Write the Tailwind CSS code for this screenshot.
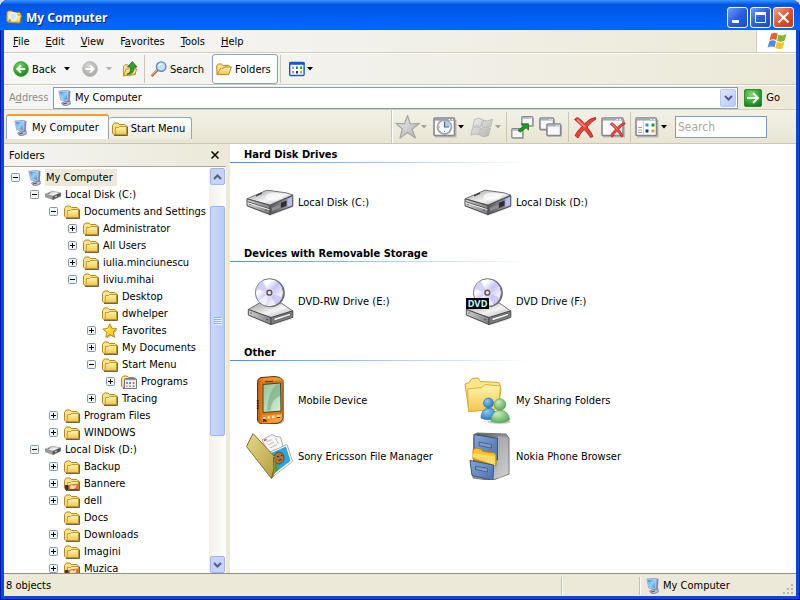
<!DOCTYPE html>
<html lang="en">
<head>
    <meta charset="UTF-8">
    <meta name="viewport" content="width=device-width, initial-scale=1.0">
    <title>My Computer</title>

    <!-- Tailwind -->
    <script src="https://cdn.jsdelivr.net/npm/@tailwindcss/browser@4"></script>
</head>
<body class="bg-[#d4dcf0] font-['Tahoma','DejaVu_Sans_Condensed',sans-serif] text-[11px] leading-[15px] text-black">

    <!-- Icon sprite -->
    <svg class="absolute h-0 w-0">
        <defs>
            <linearGradient id="g-folder" x1="0" y1="0" x2="0" y2="1"><stop offset="0" stop-color="#fff6b0"/><stop offset="1" stop-color="#f2c64c"/></linearGradient>
            <linearGradient id="g-screen" x1="0" y1="0" x2="1" y2="1"><stop offset="0" stop-color="#2f86e8"/><stop offset=".5" stop-color="#8fd6fb"/><stop offset="1" stop-color="#2f84e2"/></linearGradient>
            <linearGradient id="g-metal" x1="0" y1="0" x2="1" y2="1"><stop offset="0" stop-color="#9c9c9e"/><stop offset=".55" stop-color="#f4f4f4"/><stop offset="1" stop-color="#a2a2a6"/></linearGradient>
            <linearGradient id="g-side" x1="0" y1="0" x2="1" y2="0"><stop offset="0" stop-color="#5c5c5e"/><stop offset="1" stop-color="#a4a4b6"/></linearGradient>
            <linearGradient id="g-front" x1="0" y1="0" x2="1" y2="0"><stop offset="0" stop-color="#d0d0d0"/><stop offset="1" stop-color="#808083"/></linearGradient>
            <linearGradient id="g-disc" x1="0" y1="0" x2="1" y2="1"><stop offset="0" stop-color="#e2e2f4"/><stop offset=".3" stop-color="#fff"/><stop offset=".5" stop-color="#c4c4fa"/><stop offset=".75" stop-color="#f6f0ff"/><stop offset="1" stop-color="#c8c8e8"/></linearGradient>
            <radialGradient id="g-green" cx=".4" cy=".3" r=".8"><stop offset="0" stop-color="#7fdc6c"/><stop offset=".6" stop-color="#2ea32a"/><stop offset="1" stop-color="#15741a"/></radialGradient>
            <radialGradient id="g-grey" cx=".4" cy=".3" r=".8"><stop offset="0" stop-color="#d8d8d6"/><stop offset="1" stop-color="#a3a3a0"/></radialGradient>
            <linearGradient id="g-orange" x1="0" y1="0" x2="1" y2="0"><stop offset="0" stop-color="#c65a08"/><stop offset=".25" stop-color="#f58a1c"/><stop offset="1" stop-color="#f9a642"/></linearGradient>
            <linearGradient id="g-lcd" x1="0" y1="0" x2="1" y2="1"><stop offset="0" stop-color="#8fc39b"/><stop offset="1" stop-color="#d4f2d4"/></linearGradient>
            <linearGradient id="g-olive" x1="0" y1="0" x2="1" y2="1"><stop offset="0" stop-color="#e8d98a"/><stop offset="1" stop-color="#b39c3c"/></linearGradient>
            <linearGradient id="g-drawer" x1="0" y1="0" x2="1" y2="1"><stop offset="0" stop-color="#86a6d4"/><stop offset="1" stop-color="#4a70ac"/></linearGradient>
            <linearGradient id="g-cabinet" x1="0" y1="0" x2="1" y2="1"><stop offset="0" stop-color="#4c4c4e"/><stop offset=".6" stop-color="#a8a8aa"/><stop offset="1" stop-color="#e0e0e0"/></linearGradient>
            <radialGradient id="g-blueman" cx=".35" cy=".3" r=".8"><stop offset="0" stop-color="#8ccaf8"/><stop offset="1" stop-color="#1a6cc4"/></radialGradient>
            <radialGradient id="g-greenman" cx=".35" cy=".3" r=".8"><stop offset="0" stop-color="#c8ecc0"/><stop offset="1" stop-color="#4ea64c"/></radialGradient>
            <linearGradient id="g-silver" x1="0" y1="0" x2="1" y2="1"><stop offset="0" stop-color="#f0f0ee"/><stop offset="1" stop-color="#b2b2b0"/></linearGradient>

            <symbol id="folder" viewBox="0 0 16 16">
                <path d="M2 14.5h13.5V5.500" fill="none" stroke="#6b6558"/>
                <path d="M.5 4.500 2.300 2h3.700l1.500 1.500h5.500l1.500 1.500v8.500H1.800L.5 12z" fill="#fbe48c" stroke="#b8861c"/>
                <path d="M3.500 6.500h3l1.200-1h6.800v8H3z" fill="url(#g-folder)" stroke="#c08f1f" stroke-width=".9"/>
            </symbol>
            <symbol id="folder-open" viewBox="0 0 16 16">
                <path d="M1 13.500.7 4.600 2.400 3h3.200l1.400 1.400h5.600l.8 1.200v2.200" fill="#fbe38b" stroke="#b98617"/>
                <path d="M1.200 13.600 4.600 7.400l3-.2 1-1.200h6.800l-2.700 7.600z" fill="url(#g-folder)" stroke="#b98617"/>
            </symbol>
            <symbol id="folder-media" viewBox="0 0 16 16">
                <use href="#folder"/>
                <path d="M1 9q3 1.500 6-.8l7.500-.7v6.200H1.500z" fill="#d9762a"/>
                <path d="M1 9h3.400v5H1.400z" fill="#3a3230"/>
                <path d="M6 10.200q2-2 4-.4l2.500-1.200-.8 3.200-3 1.500-2.700-.8z" fill="#f6d7b4"/>
                <path d="M5 13.700h9.500" stroke="#7a3a18"/>
            </symbol>
            <symbol id="folder-programs" viewBox="0 0 16 16">
                <use href="#folder"/>
                <rect x="3.500" y="4.500" width="12" height="10" rx="1" fill="#f6f6fb" stroke="#6c7684"/>
                <path d="M4 5.500h11" stroke="#8d99ad" stroke-width="1.400"/>
                <path d="M6 8v2" stroke="#7f68c8" stroke-width="1.600"/><path d="M9 8v2" stroke="#2c7ae0" stroke-width="1.600"/><path d="M12.600 8v2" stroke="#e05a34" stroke-width="1.600"/>
                <path d="M6 11.500v1.500" stroke="#e6a32a" stroke-width="1.600"/><path d="M9 11.500v1.500" stroke="#e05a34" stroke-width="1.600"/><path d="M12.600 11.500v1.500" stroke="#2f9a38" stroke-width="1.600"/>
            </symbol>
            <symbol id="folder-search" viewBox="0 0 16 16">
                <path d="M1 12.500V3.500L2.400 2h3.800l1.400 1.500h6l1 1.300v8z" fill="#fbe38b" stroke="#c08a1c"/>
                <path d="M3 13.500 4.600 6h10.900l-1.800 8z" fill="url(#g-folder)" stroke="#b98617"/>
                <circle cx="7.300" cy="7.600" r="3.800" fill="#cfe8fb" stroke="#f4f4f4" stroke-width="1.400"/>
                <path d="m4.500 10.600-2 3" stroke="#c98b42" stroke-width="2"/>
            </symbol>
            <symbol id="computer" viewBox="0 0 16 16">
                <path d="M10.500 1 13.500.8l-.7 10.700-3.300.8z" fill="#8088ac"/>
                <path d="M1.800 1 11 .3l1 .8-1.200 10-7-1z" fill="#c3cdea" stroke="#8a96bd" stroke-width=".7"/>
                <path d="M2.800 2 10.800 1.400 9.800 9.900l-5.200-.8z" fill="url(#g-screen)"/>
                <path d="M4.500 13.200q2.500-2.400 5-1.400l3.500-1 .3 3.200-4 1.600q-3.600.5-4.800-2.400z" fill="#b9bed2" stroke="#6f7696" stroke-width=".8"/>
                <path d="m6 14 4-1" stroke="#4e577a"/>
            </symbol>
            <symbol id="disk-small" viewBox="0 0 16 16">
                <path d="m.3 7.200 7-3 8.200 1.700L8 9.400z" fill="url(#g-metal)" stroke="#868686" stroke-width=".6"/>
                <path d="M.3 7.200 8 9.600v3L.3 9.800z" fill="#a0a0a2" stroke="#666" stroke-width=".5"/>
                <path d="m8 9.600 7.500-3.600v3.200L8 12.600z" fill="#555558" stroke="#4a4a4c" stroke-width=".5"/>
                <path d="m9.800 10 2.200-1" stroke="#ddd"/><path d="m2.800 6.900 2.400-1" stroke="#555" stroke-width=".7"/>
            </symbol>
            <symbol id="star" viewBox="0 0 16 16">
                <path d="m8.800 2 2 4.300 4.800.4-3.600 3.400 1.300 5.200-4.500-2.500-4.300 3 .9-5.100z" fill="#777" opacity=".6"/>
                <path d="m7.800.8 2 4.400 4.900.3-3.600 3.400 1.300 5-4.500-2.500-4.100 2.900.9-5L.9 6l4.800-.7z" fill="#fdd52a" stroke="#b9820c" stroke-width=".9"/>
                <path d="M7.600 2.800 6.400 6l-3 .6 3 .8z" fill="#fff7bd"/>
            </symbol>
            <symbol id="plus" viewBox="0 0 9 9">
                <rect x=".5" y=".5" width="8" height="8" rx="1" fill="#f4f3ee" stroke="#7898b5"/>
                <path d="M2 4.500h5M4.500 2v5" stroke="#000"/>
            </symbol>
            <symbol id="minus" viewBox="0 0 9 9">
                <rect x=".5" y=".5" width="8" height="8" rx="1" fill="#f4f3ee" stroke="#7898b5"/>
                <path d="M2 4.500h5" stroke="#000"/>
            </symbol>
            <symbol id="caret" viewBox="0 0 6 4"><path d="M0 0h6L3 3.500z" fill="currentColor"/></symbol>
            <symbol id="chevron" viewBox="0 0 9 6"><path d="m1 1 3.500 3.500L8 1" fill="none" stroke="#4d6185" stroke-width="2"/></symbol>
            <symbol id="back" viewBox="0 0 16 16">
                <circle cx="8" cy="8" r="7.400" fill="url(#g-green)" stroke="#4aa544" stroke-width=".8"/>
                <path d="M12.400 8H5M8 4.400 4.400 8 8 11.600" fill="none" stroke="#fff" stroke-width="2"/>
            </symbol>
            <symbol id="forward" viewBox="0 0 16 16">
                <circle cx="8" cy="8" r="7.400" fill="url(#g-grey)" stroke="#b2b2b0" stroke-width=".8"/>
                <path d="M3.600 8H11M8 4.400 11.600 8 8 11.600" fill="none" stroke="#fff" stroke-width="2"/>
            </symbol>
            <symbol id="up" viewBox="0 0 16 16">
                <path d="M1.500 14.800V5.200L3 3.800h3l1.300 1.300h6.200v8.200z" fill="#fbe38b" stroke="#b98617" stroke-width=".8"/>
                <path d="M1.600 14.800 4 8h10.800l-2 5.600z" fill="url(#g-folder)" stroke="#b98617" stroke-width=".8"/>
                <path d="M5 13.200q4-1 3.800-7.200H5.600L10.400.6 15 6h-2.900q.2 7.600-7.100 7.200z" fill="#2fa52c" stroke="#146b18" stroke-width=".8"/>
            </symbol>
            <symbol id="search" viewBox="0 0 16 16">
                <path d="m1.400 14.400 5-5.200" stroke="#a87458" stroke-width="2.600" stroke-linecap="round"/>
                <path d="m1.400 13.800 4.500-4.700" stroke="#e2b79a" stroke-linecap="round"/>
                <circle cx="10.200" cy="5.600" r="4.700" fill="#bfe4fc" stroke="#6585bd" stroke-width="1.400"/>
                <path d="M7.600 5.200q.6-2.200 2.800-2.400" fill="none" stroke="#fff" stroke-width="1.300"/>
            </symbol>
            <symbol id="views" viewBox="0 0 16 16">
                <rect x=".7" y="1.500" width="14.400" height="13" rx="1" fill="#fff" stroke="#1459c9" stroke-width="1.400"/>
                <path d="M.5 2.500h15" stroke="#1459c9" stroke-width="2.600"/>
                <path d="M3 5.500h2v2.600H3z" fill="#a996d4"/><path d="M7 5.500h2v2.600H7z" fill="#2c70d8"/><path d="M11 5.500h2v2.600h-2z" fill="#1d9b24"/>
                <path d="M3 10h2v2.600H3z" fill="#ef7c52"/><path d="M7 10h2v2.600H7z" fill="#122e86"/><path d="M11 10h2v2.600h-2z" fill="#d4a313"/>
            </symbol>
            <symbol id="go" viewBox="0 0 18 18">
                <rect x=".5" y=".5" width="17" height="17" rx="1.500" fill="url(#g-green)" stroke="#2f8c30"/>
                <path d="M3 9h10.500M9 4l5 5-5 5" fill="none" stroke="#fff" stroke-width="2"/>
            </symbol>
            <symbol id="flag" viewBox="0 0 20 18">
                <path d="M4 2.200Q7-.6 10.600 1.700L9.300 8.200Q6 6.400 2.500 8.500z" fill="#ec5f2c"/>
                <path d="M11.500 2.400Q15 4.600 19.500 2L17.700 8.500Q14.200 10.700 10.100 8.700z" fill="#7cb832"/>
                <path d="M2.200 9.500Q5.500 7.400 9 9.200L7.600 15.600Q4.200 13.600.6 15.700z" fill="#4c8fe4"/>
                <path d="M9.900 9.700Q13.600 11.800 17.400 9.700L15.800 15.900Q12 18.200 8.400 16z" fill="#fbc321"/>
            </symbol>
            <symbol id="flag-grey" viewBox="0 0 24 24">
                <path d="M4.500 4.500Q8.500 2 12.500 4.500L11 11.500Q7 9.500 2.800 11.800zM13.600 5.200Q17.500 7 22.500 4.200L20.700 11.600Q16.600 14.200 12.100 12zM2.500 13Q6.600 10.600 10.700 12.800L9.200 20Q5 17.700.8 20.100zM11.800 13.300Q16 15.500 20.400 13L18.600 20.400Q14.500 23 10.300 20.700z" fill="url(#g-silver)" stroke="#b2b2b0" stroke-width=".8"/>
            </symbol>
            <symbol id="star-grey" viewBox="0 0 26 26">
                <path d="m12.500 1.500 2.800 8.500 9.200-.6-7.500 5.800 3.500 8.800-8-5.400-7.500 5.400 2.400-9-6.500-5.600 8.600.4z" fill="url(#g-silver)" stroke="#a4a4a2" stroke-width="1.200" stroke-linejoin="round"/>
            </symbol>
            <symbol id="history" viewBox="0 0 24 24">
                <path d="M2 21.500h20.500V5" fill="none" stroke="#bdbab0" stroke-width="2"/>
                <rect x="1" y="3" width="20.500" height="17.500" rx="1" fill="#fff" stroke="#85878d" stroke-width="1.600"/>
                <path d="M1.500 4.500h20" stroke="#9a9da6" stroke-width="2.400"/><path d="M15.500 4.500h1.500M18.500 4.500H20" stroke="#fff"/>
                <circle cx="11.500" cy="12" r="7" fill="#f8fbff" stroke="#a1a5ad" stroke-width="1.800"/>
                <path d="M11.500 6v6h5.500q-.5-5.500-5.500-6z" fill="#a5cdf0"/><path d="M11.500 6.500V12h4.500" fill="none" stroke="#5b6270" stroke-width="1.200"/>
                <path d="M11.500 17v-1M5.800 12h1" stroke="#777"/>
            </symbol>
            <symbol id="mini-window" viewBox="0 0 14 12">
                <path d="M1.500 11.500H13.500V2" fill="none" stroke="#bdbab0"/>
                <rect x=".8" y=".8" width="12" height="10" rx="1" fill="#f7f8fa" stroke="#85878f" stroke-width="1.400"/>
                <path d="M1.500 2.200h11" stroke="#aab1bd" stroke-width="1.600"/><path d="M9 2.200h1M11 2.200h1" stroke="#fff"/>
            </symbol>
            <symbol id="window-move" viewBox="0 0 24 24">
                <use href="#mini-window" x="10" y="1" width="13" height="11"/>
                <use href="#mini-window" x="0" y="13" width="13" height="11"/>
                <path d="M7 15.500 12.500 11l-2-2.200h7V15l-2.400-2.200-6 4.400z" fill="#15a01c" stroke="#0b6d12" stroke-width=".8"/>
            </symbol>
            <symbol id="window-copy" viewBox="0 0 24 24">
                <use href="#mini-window" x="0" y="2" width="16" height="14"/>
                <use href="#mini-window" x="7" y="8" width="16" height="14"/>
            </symbol>
            <symbol id="delete" viewBox="0 0 24 24">
                <path d="M1.500 4.500q2-2.500 4-1.500 3.500 2.500 6 6Q16.500 3 22.500 2.500L23 4q-5 2.500-9 8 4 4.500 6 9.500l-2.500 1q-3-5-6.500-8-4 4-6 8.500L2 20.500q2.500-5 7-9-3.500-4-7.500-7z" fill="#e84438" stroke="#b02420" stroke-width=".9"/>
                <path d="m4 4.500 8 7.500" stroke="#fb938a" stroke-width="1.200"/>
            </symbol>
            <symbol id="window-close" viewBox="0 0 26 24">
                <path d="M2 21.500h21V5" fill="none" stroke="#bdbab0" stroke-width="2"/>
                <rect x="1" y="3" width="21" height="17.500" rx="1" fill="#fbfbfc" stroke="#85878f" stroke-width="1.600"/>
                <path d="M1.500 4.500h20" stroke="#a3a9b4" stroke-width="2.200"/><path d="M15.500 4.500H17M18.500 4.500H20" stroke="#fff"/>
                <use href="#delete" x="8" y="6" width="17" height="17"/>
            </symbol>
            <symbol id="window-views" viewBox="0 0 24 24">
                <path d="M2 21.500h20.500V5" fill="none" stroke="#bdbab0" stroke-width="2"/>
                <rect x="1" y="3" width="20.500" height="17.500" rx="1" fill="#fff" stroke="#85878d" stroke-width="1.600"/>
                <path d="M1.500 4.500h20" stroke="#a3a9b4" stroke-width="2.200"/><path d="M15.500 4.500H17M18.500 4.500H20" stroke="#fff"/>
                <path d="M8.500 6v14" stroke="#d4d4d4"/><path d="M3 12.500h4M3 15h4M3 17.500h4" stroke="#a4a4a4"/>
                <path d="M10.500 8.500h3v3h-3z" fill="#1e90f0"/><path d="M16.500 8.500h3v3h-3z" fill="#1d9b24"/>
                <path d="M10.500 14.500h3v3h-3z" fill="#12349a"/><path d="M16.500 14.500h3v3h-3z" fill="#d9a013"/>
            </symbol>

            <symbol id="hdd" viewBox="0 0 48 48">
                <path d="M2 29 24 38l23-9v-3z" fill="#999" opacity=".35"/>
                <path d="M1 20.800 21 12.200 40 14.800 46.700 17 24 27z" fill="url(#g-metal)" stroke="#737375"/>
                <path d="M19.500 20.500q-1-5 7-6l9 1.600q4 2.400-1.500 4.900-7 3.600-14.500-.5z" fill="#fff" opacity=".65"/>
                <path d="M1 20.800 24 27.500v9L1 27.800z" fill="url(#g-front)" stroke="#4c4c4e"/>
                <path d="m1.500 23.800 22.300 7" stroke="#555"/><path d="m1.500 24.800 22.300 7" stroke="#eee"/>
                <path d="m24 27.500 22.800-10v10.600L24 36.500z" fill="url(#g-side)" stroke="#4a4a50"/>
                <path d="m35 24.800 5.500-2.400v5.400L35 30z" fill="#2e2e32"/>
                <path d="m41.500 21 4.500-2v8l-4.500 1.700z" fill="#bcbcf2"/><path d="m26 30 8-3.300v3L26 33z" fill="#8f8f93"/>
                <path d="m10 17.800 6-2.600" stroke="#3d3d3f" stroke-width="1.400"/>
                <path d="M4 26.200v1M20 31.500v1.500" stroke="#444"/>
            </symbol>
            <symbol id="optical" viewBox="0 0 48 48">
                <path d="M3 39 25 48.500 47 42z" fill="#999" opacity=".35"/>
                <path d="m2.300 32.500 11-6.500h22l11.500 8L25 41z" fill="url(#g-metal)" stroke="#737375"/>
                <path d="M2.300 32.500 25 40.500v7L2.300 38z" fill="url(#g-front)" stroke="#4c4c4e"/>
                <path d="m25 40.500 21.800-6.700v6.500L25 47.500z" fill="#7e7e82" stroke="#4a4a50"/>
                <path d="m28 41.200 16.500-5v2.300L28 44z" fill="#f2f2f2" stroke="#555" stroke-width=".7"/>
                <path d="M43 40h1.500" stroke="#24a32a"/><path d="M5 35.500v1.200M21 42v1.200" stroke="#333"/>
                <circle cx="24.600" cy="16" r="14.200" fill="#5e5e63"/>
                <circle cx="23.400" cy="15.700" r="14" fill="url(#g-disc)" stroke="#77777c"/>
                <path d="M23.400 15.700 10 12q2-6 6.500-8.600z" fill="#b6b6fa" opacity=".6"/>
                <path d="m23.400 15.700 12.500 4.500q-2 5-6.500 7.300z" fill="#b6b6fa" opacity=".6"/>
                <path d="m23.400 15.700-4 12.800q-4-1-7-5z" fill="#fff" opacity=".7"/>
                <circle cx="23.400" cy="15.700" r="4.500" fill="#eed4ee"/>
                <circle cx="23.400" cy="15.700" r="2.400" fill="#e8e8e8" stroke="#5a5a5e" stroke-width="1.500"/>
            </symbol>
            <symbol id="pda" viewBox="0 0 48 48">
                <path d="M13 47.500 34 48q4-1 4-4V5z" fill="#888" opacity=".5"/>
                <path d="M11.500 5.500Q12 2 15 1.500l14-1q6 0 8 4v38q-1 4-6 5l-14 .5q-5-.5-5.500-4z" fill="url(#g-orange)" stroke="#5c3213"/>
                <path d="M15.500 5.500 36 4v34l-20 1z" fill="#d97818"/>
                <path d="M17 8.500 34.500 7l.5 28-18 1.500z" fill="url(#g-lcd)" stroke="#4e4430"/>
                <path d="M21 34.500q1-18 9-26l4-.3v12q-9 3-9.500 14z" fill="#5c9a70" opacity=".45"/>
                <path d="M19 5.500h8" stroke="#7d3b10" stroke-width="1.400"/><path d="M30.500 3.500h3" stroke="#8dc63a" stroke-width="1.600"/>
                <path d="M11.800 24v9" stroke="#3b230f" stroke-width="2" stroke-dasharray="1.500 1"/>
                <path d="M17 42h2.500M21.500 41.300h2.500M26 40.800h2.500M31 40h3" stroke="#efe0c4" stroke-width="2.200"/><path d="M17 43.500h2.500M31 41.500h3" stroke="#5c3213"/>
                <path d="M17 45.500q2-2 3.500 0" fill="none" stroke="#4a2408" stroke-width="1.400"/>
            </symbol>
            <symbol id="sony" viewBox="0 0 48 48">
                <path d="m16 8 10-5.500 4 2 4.500.5 4.500 16-12 9z" fill="#f6f6f6" stroke="#9b9b9b" stroke-width=".8"/>
                <path d="m20.500 10 5-2.500M22 13l6-3M24 16l7-3.500M29.500 6l3 6" stroke="#b4b4b8" stroke-width=".9"/><path d="m18 8.500 2.500-1" stroke="#d34b40" stroke-width="1.500"/>
                <path d="m22 21 19-8.500 5.600 17L27 44.500z" fill="#fff" stroke="#999" stroke-width=".8"/>
                <path d="m24 21.500 16-7 4.500 14.500L28 41.500z" fill="#27a7e4"/>
                <path d="m28 41.500 5-4-2-5-5 3z" fill="#2fb344"/>
                <ellipse cx="33" cy="26" rx="5" ry="6" fill="#a87438" stroke="#5e3c1b" stroke-width=".8"/><path d="M31 24.500h2M35 23.500h1.500M32.500 28.500l3-1" stroke="#3c240f"/>
                <path d="M.5 14.500 7 1.500l21.500 23L30 38l-4.500 8.500z" fill="url(#g-olive)" stroke="#7f7130"/>
                <path d="m27.500 25 .5 12-2.500 9" fill="none" stroke="#6d6026"/>
            </symbol>
            <symbol id="sharing" viewBox="0 0 48 48">
                <path d="m1 8 4-1.500L8 2.500l6-.5 2.500 3.500L35 6.500 37 13l-3 20-29 2.500z" fill="#fde68a" stroke="#d2a52c"/>
                <path d="M3.500 13 18 11.500l3-3L36.500 10 34 33 4.500 35.500z" fill="url(#g-folder)" stroke="#dcb13c"/>
                <ellipse cx="35" cy="46" rx="12" ry="1.800" fill="#777" opacity=".4"/>
                <path d="M17 42q0-9 8-10 7 1 8 9-8 5-16 1z" fill="url(#g-blueman)" stroke="#1b63b0" stroke-width=".6"/>
                <circle cx="24.500" cy="27" r="5" fill="url(#g-blueman)" stroke="#1b63b0" stroke-width=".6"/>
                <path d="M27 45q0-10 9-11 9 1 9.500 10-9 5-18.500 1z" fill="url(#g-greenman)" stroke="#4a964a" stroke-width=".6"/>
                <circle cx="36" cy="28.500" r="5.800" fill="url(#g-greenman)" stroke="#4a964a" stroke-width=".6"/>
            </symbol>
            <symbol id="nokia" viewBox="0 0 48 48">
                <path d="M10 2.500 13 1l29 1 3 4v36L28 48.500 9 46z" fill="url(#g-cabinet)" stroke="#777"/>
                <path d="m34 4 10 2v36l-10 5z" fill="#c4c4c6" opacity=".5"/>
                <path d="m10 2.500 23.500 4V28L10 24z" fill="url(#g-drawer)" stroke="#39547f"/>
                <path d="M15 10 27.500 12.500v3.500L15 13.500z" fill="#7f9dca" stroke="#3a5584" stroke-width=".8"/>
                <path d="M9 27V17.500l3-1.500 5 1 2 2.500 11.500 1.500 1.500 2v10.500z" fill="#fbc12c" stroke="#c2860c"/>
                <path d="M9 25v-4l22 3.500v9z" fill="#fdda62"/>
                <path d="m6 28.500 23.500 4.500-.5 15.500-21-5z" fill="url(#g-drawer)" stroke="#39547f"/>
                <path d="m11.500 34 12 2.500v3.500l-12-2.500z" fill="#7f9dca" stroke="#3a5584" stroke-width=".8"/>
            </symbol>
        </defs>
    </svg>

    <div class="flex h-screen flex-col overflow-hidden rounded-t-lg bg-[#0848dc] shadow-[inset_1px_0_#0019b4,inset_-1px_-1px_#00138c]">

        <!-- Title Bar -->
        <header class="flex h-[30px] shrink-0 items-center bg-linear-to-b from-[#3d95ff] from-0% via-[#0054e3] via-15% to-[#0066ff] to-90% pl-1.5 pr-1.5 pt-1">
            <svg class="h-4 w-4"><use href="#folder-search"/></svg>
            <h1 class="ml-1 flex-1 font-['Trebuchet_MS','Noto_Sans',sans-serif] text-[12px] font-bold text-white [text-shadow:1px_1px_#0a1e7c]">My Computer</h1>
            <div class="flex gap-0.5">
                <button aria-label="Minimize" class="h-[21px] w-[21px] rounded-[3px] border border-white bg-linear-to-br from-[#6d9cf4] via-[#2a5fe0] to-[#1b4bcb]">
                    <svg class="h-full w-full" viewBox="0 0 19 19"><path d="M4 13.500h7" stroke="#fff" stroke-width="3"/></svg>
                </button>
                <button aria-label="Maximize" class="h-[21px] w-[21px] rounded-[3px] border border-white bg-linear-to-br from-[#6d9cf4] via-[#2a5fe0] to-[#1b4bcb]">
                    <svg class="h-full w-full" viewBox="0 0 19 19"><path d="M4.500 5v9.500h10V5z" fill="none" stroke="#fff"/><path d="M4 5.500h11" stroke="#fff" stroke-width="3"/></svg>
                </button>
                <button aria-label="Close" class="h-[21px] w-[21px] rounded-[3px] border border-white bg-linear-to-br from-[#f0a085] via-[#e0532c] to-[#c23a12]">
                    <svg class="h-full w-full" viewBox="0 0 19 19"><path d="m4.500 4.500 10 10M14.500 4.500l-10 10" stroke="#fff" stroke-width="2.200"/></svg>
                </button>
            </div>
        </header>

        <div class="mx-1 mb-1 flex min-h-0 flex-1 flex-col bg-[#ece9d8]">

            <!-- Menu Bar -->
            <div class="flex h-[23px] shrink-0 border-b border-[#d2cdb5] bg-linear-to-r from-[#f7f7f9] to-[#ece9d8]">
                <nav class="flex flex-1 items-center gap-4 pl-[9px]">
                    <a href="#"><u>F</u>ile</a>
                    <a href="#"><u>E</u>dit</a>
                    <a href="#"><u>V</u>iew</a>
                    <a href="#">F<u>a</u>vorites</a>
                    <a href="#"><u>T</u>ools</a>
                    <a href="#"><u>H</u>elp</a>
                </nav>
                <div class="flex w-10 justify-center border-l border-[#d2cdb5] bg-white pt-0.5">
                    <svg class="h-[18px] w-5"><use href="#flag"/></svg>
                </div>
            </div>

            <!-- Standard Buttons -->
            <div class="flex h-8 shrink-0 items-center border-y border-t-white border-b-[#d2cdb5] bg-linear-to-r from-[#f7f7f9] to-[#ece9d8] pl-[9px]">
                <button class="flex w-[50px] items-center gap-[3px]"><svg class="h-4 w-4"><use href="#back"/></svg>Back</button>
                <button aria-label="Back history" class="w-[19px]"><svg class="ml-px h-1 w-1.5"><use href="#caret"/></svg></button>
                <button aria-label="Forward" class="w-6"><svg class="h-4 w-4"><use href="#forward"/></svg></button>
                <button aria-label="Forward history" class="w-4 text-[#b8b5a8]"><svg class="h-1 w-1.5"><use href="#caret"/></svg></button>
                <button aria-label="Up" class="w-[22px]"><svg class="h-4 w-4"><use href="#up"/></svg></button>
                <span class="h-7 w-px bg-[#cbc7b2]"></span>
                <button class="ml-1.5 flex w-[61px] items-center gap-[3px]"><svg class="h-4 w-4"><use href="#search"/></svg>Search</button>
                <button aria-pressed="true" class="flex h-[30px] items-center gap-[3px] rounded-[3px] border border-[#84a1bd] bg-white pl-[3px] pr-1.5"><svg class="h-4 w-4"><use href="#folder-open"/></svg>Folders</button>
                <span class="ml-0.5 h-7 w-px bg-[#cbc7b2]"></span>
                <button aria-label="Views" class="ml-2 flex items-center gap-0.5"><svg class="h-4 w-4"><use href="#views"/></svg><svg class="h-1 w-1.5"><use href="#caret"/></svg></button>
            </div>

            <!-- Address Bar -->
            <form class="flex h-6 shrink-0 items-center border-t border-white bg-linear-to-r from-[#f4f4f3] to-[#ece9d8] pl-[5px] pr-4">
                <label for="address" class="w-11 text-[#8f8c7c]">A<u>d</u>dress</label>
                <div class="flex h-[22px] flex-1 items-center border border-[#7f9db9] bg-white pl-[3px] pr-px">
                    <svg class="h-4 w-4"><use href="#computer"/></svg>
                    <input id="address" type="text" value="My Computer" class="ml-0.5 min-w-0 flex-1 outline-none">
                    <button type="button" aria-label="Show addresses" class="flex h-[18px] w-4 items-center justify-center rounded-xs border border-[#b3c8f5] bg-linear-to-br from-[#e0e9fe] to-[#b4c8f6]"><svg class="h-1.5 w-[9px]"><use href="#chevron"/></svg></button>
                </div>
                <button class="ml-1.5 flex items-center gap-1"><svg class="h-[18px] w-[18px]"><use href="#go"/></svg>Go</button>
            </form>

            <!-- Tabs and Tools -->
            <div class="flex h-[35px] shrink-0 border-y border-t-[#d2cdb5] border-b-[#cbc7b2] bg-linear-to-b from-[#f3f1e7] to-[#e8e5d3]">
                <nav class="flex flex-1 items-start pl-0.5 pt-1">
                    <a href="#" aria-current="page" class="flex h-[25px] items-center gap-[3px] rounded-t-[3px] border border-b-0 border-t-2 border-[#91a7b4] border-t-[#f79d2d] bg-[#fcfcfe] pl-1.5 pr-[9px]"><svg class="h-4 w-4"><use href="#computer"/></svg>My Computer</a>
                    <a href="#" class="mt-[3px] flex h-[22px] items-center gap-[3px] rounded-t-[3px] border border-b-0 border-l-0 border-[#91a7b4] bg-linear-to-b from-white to-[#eeecdf] pl-[3px] pr-1.5"><svg class="h-4 w-4"><use href="#folder"/></svg>Start Menu</a>
                </nav>
                <div class="flex items-center border-l border-[#cbc7b2] pl-[3px] pr-[29px] shadow-[inset_1px_0_white]">
                    <button aria-label="Add favorite" class="flex w-[38px] items-center text-[#a5a294]"><svg class="h-[26px] w-[26px]"><use href="#star-grey"/></svg><svg class="h-1 w-1.5"><use href="#caret"/></svg></button>
                    <button aria-label="History" class="flex w-[37px] items-center gap-px"><svg class="h-6 w-6"><use href="#history"/></svg><svg class="h-1 w-1.5"><use href="#caret"/></svg></button>
                    <button aria-label="Start" class="flex w-9 items-center gap-px text-[#a5a294]"><svg class="h-6 w-6"><use href="#flag-grey"/></svg><svg class="h-1 w-1.5"><use href="#caret"/></svg></button>
                    <span class="h-[30px] w-px bg-[#cbc7b2]"></span>
                    <button aria-label="Move to" class="ml-1 w-7"><svg class="h-6 w-6"><use href="#window-move"/></svg></button>
                    <button aria-label="Copy to" class="w-[29px]"><svg class="h-6 w-6"><use href="#window-copy"/></svg></button>
                    <span class="h-[30px] w-px bg-[#cbc7b2]"></span>
                    <button aria-label="Delete" class="ml-1 w-7"><svg class="h-6 w-6"><use href="#delete"/></svg></button>
                    <button aria-label="Close window" class="w-[29px]"><svg class="h-6 w-[26px]"><use href="#window-close"/></svg></button>
                    <span class="h-[30px] w-px bg-[#cbc7b2]"></span>
                    <button aria-label="Change view" class="ml-1 flex w-10 items-center gap-0.5"><svg class="h-6 w-6"><use href="#window-views"/></svg><svg class="h-1 w-1.5"><use href="#caret"/></svg></button>
                    <input type="search" aria-label="Search" placeholder="Search" class="h-[22px] w-[92px] border border-[#7f9db9] bg-white px-0.5 text-[12px] outline-none placeholder:text-[#aca899]">
                </div>
            </div>

            <div class="flex min-h-0 flex-1">

                <!-- Folders Pane -->
                <aside class="flex w-[222px] shrink-0 flex-col">
                    <div class="flex h-[23px] shrink-0 items-center justify-between border-b border-[#aca899] bg-linear-to-r from-[#f4f4f3] to-[#ece9d8] pl-[5px] pr-[7px]">
                        <h2>Folders</h2>
                        <button aria-label="Close folders"><svg class="h-2 w-2" viewBox="0 0 8 8"><path d="m.5.5 7 7m0-7-7 7" stroke="#000" stroke-width="1.500"/></svg></button>
                    </div>
                    <div class="flex min-h-0 flex-1 bg-white pt-px">
                        <ul class="min-w-0 flex-1 overflow-hidden pl-[7px] pt-px whitespace-nowrap">
                            <li>
                                <div class="flex h-[17px] items-center"><button aria-label="Collapse" class="mr-[7px] flex"><svg class="h-[9px] w-[9px]"><use href="#minus"/></svg></button><svg class="mr-0.5 h-4 w-4"><use href="#computer"/></svg><span class="flex h-[17px] items-center bg-[#ece9d8] pl-px pr-1">My Computer</span></div>
                                <ul class="pl-[19px]">
                                    <li>
                                        <div class="flex h-[17px] items-center"><button aria-label="Collapse" class="mr-1.5 flex"><svg class="h-[9px] w-[9px]"><use href="#minus"/></svg></button><svg class="mr-1 h-4 w-4"><use href="#disk-small"/></svg>Local Disk (C:)</div>
                                        <ul class="pl-[19px]">
                                            <li>
                                                <div class="flex h-[17px] items-center"><button aria-label="Collapse" class="mr-1.5 flex"><svg class="h-[9px] w-[9px]"><use href="#minus"/></svg></button><svg class="mr-1 h-4 w-4"><use href="#folder"/></svg>Documents and Settings</div>
                                                <ul class="pl-[19px]">
                                                    <li class="flex h-[17px] items-center"><button aria-label="Expand" class="mr-1.5 flex"><svg class="h-[9px] w-[9px]"><use href="#plus"/></svg></button><svg class="mr-1 h-4 w-4"><use href="#folder"/></svg>Administrator</li>
                                                    <li class="flex h-[17px] items-center"><button aria-label="Expand" class="mr-1.5 flex"><svg class="h-[9px] w-[9px]"><use href="#plus"/></svg></button><svg class="mr-1 h-4 w-4"><use href="#folder"/></svg>All Users</li>
                                                    <li class="flex h-[17px] items-center"><button aria-label="Expand" class="mr-1.5 flex"><svg class="h-[9px] w-[9px]"><use href="#plus"/></svg></button><svg class="mr-1 h-4 w-4"><use href="#folder"/></svg>iulia.minciunescu</li>
                                                    <li>
                                                        <div class="flex h-[17px] items-center"><button aria-label="Collapse" class="mr-1.5 flex"><svg class="h-[9px] w-[9px]"><use href="#minus"/></svg></button><svg class="mr-1 h-4 w-4"><use href="#folder"/></svg>liviu.mihai</div>
                                                        <ul class="pl-[19px]">
                                                            <li class="flex h-[17px] items-center pl-[15px]"><svg class="mr-1 h-4 w-4"><use href="#folder"/></svg>Desktop</li>
                                                            <li class="flex h-[17px] items-center pl-[15px]"><svg class="mr-1 h-4 w-4"><use href="#folder"/></svg>dwhelper</li>
                                                            <li class="flex h-[17px] items-center"><button aria-label="Expand" class="mr-1.5 flex"><svg class="h-[9px] w-[9px]"><use href="#plus"/></svg></button><svg class="mr-1 h-4 w-4"><use href="#star"/></svg>Favorites</li>
                                                            <li class="flex h-[17px] items-center"><button aria-label="Expand" class="mr-1.5 flex"><svg class="h-[9px] w-[9px]"><use href="#plus"/></svg></button><svg class="mr-1 h-4 w-4"><use href="#folder"/></svg>My Documents</li>
                                                            <li>
                                                                <div class="flex h-[17px] items-center"><button aria-label="Collapse" class="mr-1.5 flex"><svg class="h-[9px] w-[9px]"><use href="#minus"/></svg></button><svg class="mr-1 h-4 w-4"><use href="#folder"/></svg>Start Menu</div>
                                                                <ul class="pl-[19px]">
                                                                    <li class="flex h-[17px] items-center"><button aria-label="Expand" class="mr-1.5 flex"><svg class="h-[9px] w-[9px]"><use href="#plus"/></svg></button><svg class="mr-1 h-4 w-4"><use href="#folder-programs"/></svg>Programs</li>
                                                                </ul>
                                                            </li>
                                                            <li class="flex h-[17px] items-center"><button aria-label="Expand" class="mr-1.5 flex"><svg class="h-[9px] w-[9px]"><use href="#plus"/></svg></button><svg class="mr-1 h-4 w-4"><use href="#folder"/></svg>Tracing</li>
                                                        </ul>
                                                    </li>
                                                </ul>
                                            </li>
                                            <li class="flex h-[17px] items-center"><button aria-label="Expand" class="mr-1.5 flex"><svg class="h-[9px] w-[9px]"><use href="#plus"/></svg></button><svg class="mr-1 h-4 w-4"><use href="#folder"/></svg>Program Files</li>
                                            <li class="flex h-[17px] items-center"><button aria-label="Expand" class="mr-1.5 flex"><svg class="h-[9px] w-[9px]"><use href="#plus"/></svg></button><svg class="mr-1 h-4 w-4"><use href="#folder"/></svg>WINDOWS</li>
                                        </ul>
                                    </li>
                                    <li>
                                        <div class="flex h-[17px] items-center"><button aria-label="Collapse" class="mr-1.5 flex"><svg class="h-[9px] w-[9px]"><use href="#minus"/></svg></button><svg class="mr-1 h-4 w-4"><use href="#disk-small"/></svg>Local Disk (D:)</div>
                                        <ul class="pl-[19px]">
                                            <li class="flex h-[17px] items-center"><button aria-label="Expand" class="mr-1.5 flex"><svg class="h-[9px] w-[9px]"><use href="#plus"/></svg></button><svg class="mr-1 h-4 w-4"><use href="#folder"/></svg>Backup</li>
                                            <li class="flex h-[17px] items-center"><button aria-label="Expand" class="mr-1.5 flex"><svg class="h-[9px] w-[9px]"><use href="#plus"/></svg></button><svg class="mr-1 h-4 w-4"><use href="#folder-media"/></svg>Bannere</li>
                                            <li class="flex h-[17px] items-center"><button aria-label="Expand" class="mr-1.5 flex"><svg class="h-[9px] w-[9px]"><use href="#plus"/></svg></button><svg class="mr-1 h-4 w-4"><use href="#folder"/></svg>dell</li>
                                            <li class="flex h-[17px] items-center pl-[15px]"><svg class="mr-1 h-4 w-4"><use href="#folder"/></svg>Docs</li>
                                            <li class="flex h-[17px] items-center"><button aria-label="Expand" class="mr-1.5 flex"><svg class="h-[9px] w-[9px]"><use href="#plus"/></svg></button><svg class="mr-1 h-4 w-4"><use href="#folder"/></svg>Downloads</li>
                                            <li class="flex h-[17px] items-center"><button aria-label="Expand" class="mr-1.5 flex"><svg class="h-[9px] w-[9px]"><use href="#plus"/></svg></button><svg class="mr-1 h-4 w-4"><use href="#folder"/></svg>Imagini</li>
                                            <li class="flex h-[17px] items-center"><button aria-label="Expand" class="mr-1.5 flex"><svg class="h-[9px] w-[9px]"><use href="#plus"/></svg></button><svg class="mr-1 h-4 w-4"><use href="#folder-media"/></svg>Muzica</li>
                                        </ul>
                                    </li>
                                </ul>
                            </li>
                        </ul>

                        <!-- Scrollbar -->
                        <div class="flex w-[17px] flex-col bg-linear-to-r from-[#f1f0ea] to-[#fefefb] px-px">
                            <button aria-label="Scroll up" class="flex h-[17px] shrink-0 items-center justify-center rounded-xs border border-[#9fb6ea] bg-[#c4d4fc]"><svg class="h-1.5 w-[9px] rotate-180"><use href="#chevron"/></svg></button>
                            <div class="flex-[21]"></div>
                            <div class="flex flex-[229] flex-col items-center justify-center gap-px rounded-xs border border-[#9fb6ea] bg-linear-to-r from-[#cbd9fd] to-[#b9cbf8]">
                                <span class="h-px w-[7px] bg-[#8cb0f8] shadow-[1px_1px_#eef4fe]"></span>
                                <span class="h-px w-[7px] bg-[#8cb0f8] shadow-[1px_1px_#eef4fe]"></span>
                                <span class="h-px w-[7px] bg-[#8cb0f8] shadow-[1px_1px_#eef4fe]"></span>
                                <span class="h-px w-[7px] bg-[#8cb0f8] shadow-[1px_1px_#eef4fe]"></span>
                            </div>
                            <div class="flex-[121]"></div>
                            <button aria-label="Scroll down" class="flex h-[17px] shrink-0 items-center justify-center rounded-xs border border-[#9fb6ea] bg-[#c4d4fc]"><svg class="h-1.5 w-[9px]"><use href="#chevron"/></svg></button>
                        </div>
                    </div>
                </aside>

                <!-- Contents -->
                <main class="ml-1 min-w-0 flex-1 overflow-hidden bg-white">
                    <section>
                        <h2 class="h-[18px] pl-3.5 pt-[3px] font-bold">Hard Disk Drives</h2>
                        <div class="h-px w-[300px] bg-linear-to-r from-[#3f8ff0] to-white"></div>
                        <ul class="grid grid-cols-[repeat(auto-fill,218px)] gap-y-2 pb-[17px] pl-4 pt-[15px]">
                            <li class="flex items-center gap-1"><svg class="h-12 w-12"><use href="#hdd"/></svg>Local Disk (C:)</li>
                            <li class="flex items-center gap-1"><svg class="h-12 w-12"><use href="#hdd"/></svg>Local Disk (D:)</li>
                        </ul>
                    </section>
                    <section>
                        <h2 class="h-[18px] pl-3.5 pt-[3px] font-bold">Devices with Removable Storage</h2>
                        <div class="h-px w-[300px] bg-linear-to-r from-[#3f8ff0] to-white"></div>
                        <ul class="grid grid-cols-[repeat(auto-fill,218px)] gap-y-2 pb-[17px] pl-4 pt-[15px]">
                            <li class="flex items-center gap-1"><svg class="h-12 w-12"><use href="#optical"/></svg>DVD-RW Drive (E:)</li>
                            <li class="flex items-center gap-1">
                                <svg class="h-12 w-12" viewBox="0 0 48 48">
                                    <use href="#optical"/>
                                    <rect x="2" y="21" width="23" height="11" fill="#000"/>
                                    <text x="13.500" y="30" text-anchor="middle" class="fill-[#b8f4ee] text-[9px] font-bold">DVD</text>
                                </svg>
                                DVD Drive (F:)
                            </li>
                        </ul>
                    </section>
                    <section>
                        <h2 class="h-[18px] pl-3.5 pt-[3px] font-bold">Other</h2>
                        <div class="h-px w-[300px] bg-linear-to-r from-[#3f8ff0] to-white"></div>
                        <ul class="grid grid-cols-[repeat(auto-fill,218px)] gap-y-2 pb-[17px] pl-4 pt-[15px]">
                            <li class="flex items-center gap-1"><svg class="h-12 w-12"><use href="#pda"/></svg>Mobile Device</li>
                            <li class="flex items-center gap-1"><svg class="h-12 w-12"><use href="#sharing"/></svg>My Sharing Folders</li>
                            <li class="flex items-center gap-1"><svg class="h-12 w-12"><use href="#sony"/></svg>Sony Ericsson File Manager</li>
                            <li class="flex items-center gap-1"><svg class="h-12 w-12"><use href="#nokia"/></svg>Nokia Phone Browser</li>
                        </ul>
                    </section>
                </main>
            </div>

            <!-- Status Bar -->
            <footer class="flex h-[23px] shrink-0 items-center border-t border-[#919085] pt-px">
                <p class="flex-1 pl-0.5">8 objects</p>
                <span class="h-[18px] w-[78px] border-l border-[#c5c2b2] shadow-[inset_1px_0_white]"></span>
                <p class="flex h-[18px] w-36 items-center gap-0.5 border-l border-[#c5c2b2] pl-[5px] shadow-[inset_1px_0_white]"><svg class="h-4 w-4"><use href="#computer"/></svg>My Computer</p>
                <svg class="mr-px h-3 w-3 self-end" viewBox="0 0 12 12"><path d="M8 0h2v2H8zM4 4h2v2H4zM8 4h2v2H8zM0 8h2v2H0zM4 8h2v2H4zM8 8h2v2H8z" fill="#b8b4a0"/></svg>
            </footer>
        </div>
    </div>
</body>
</html>
